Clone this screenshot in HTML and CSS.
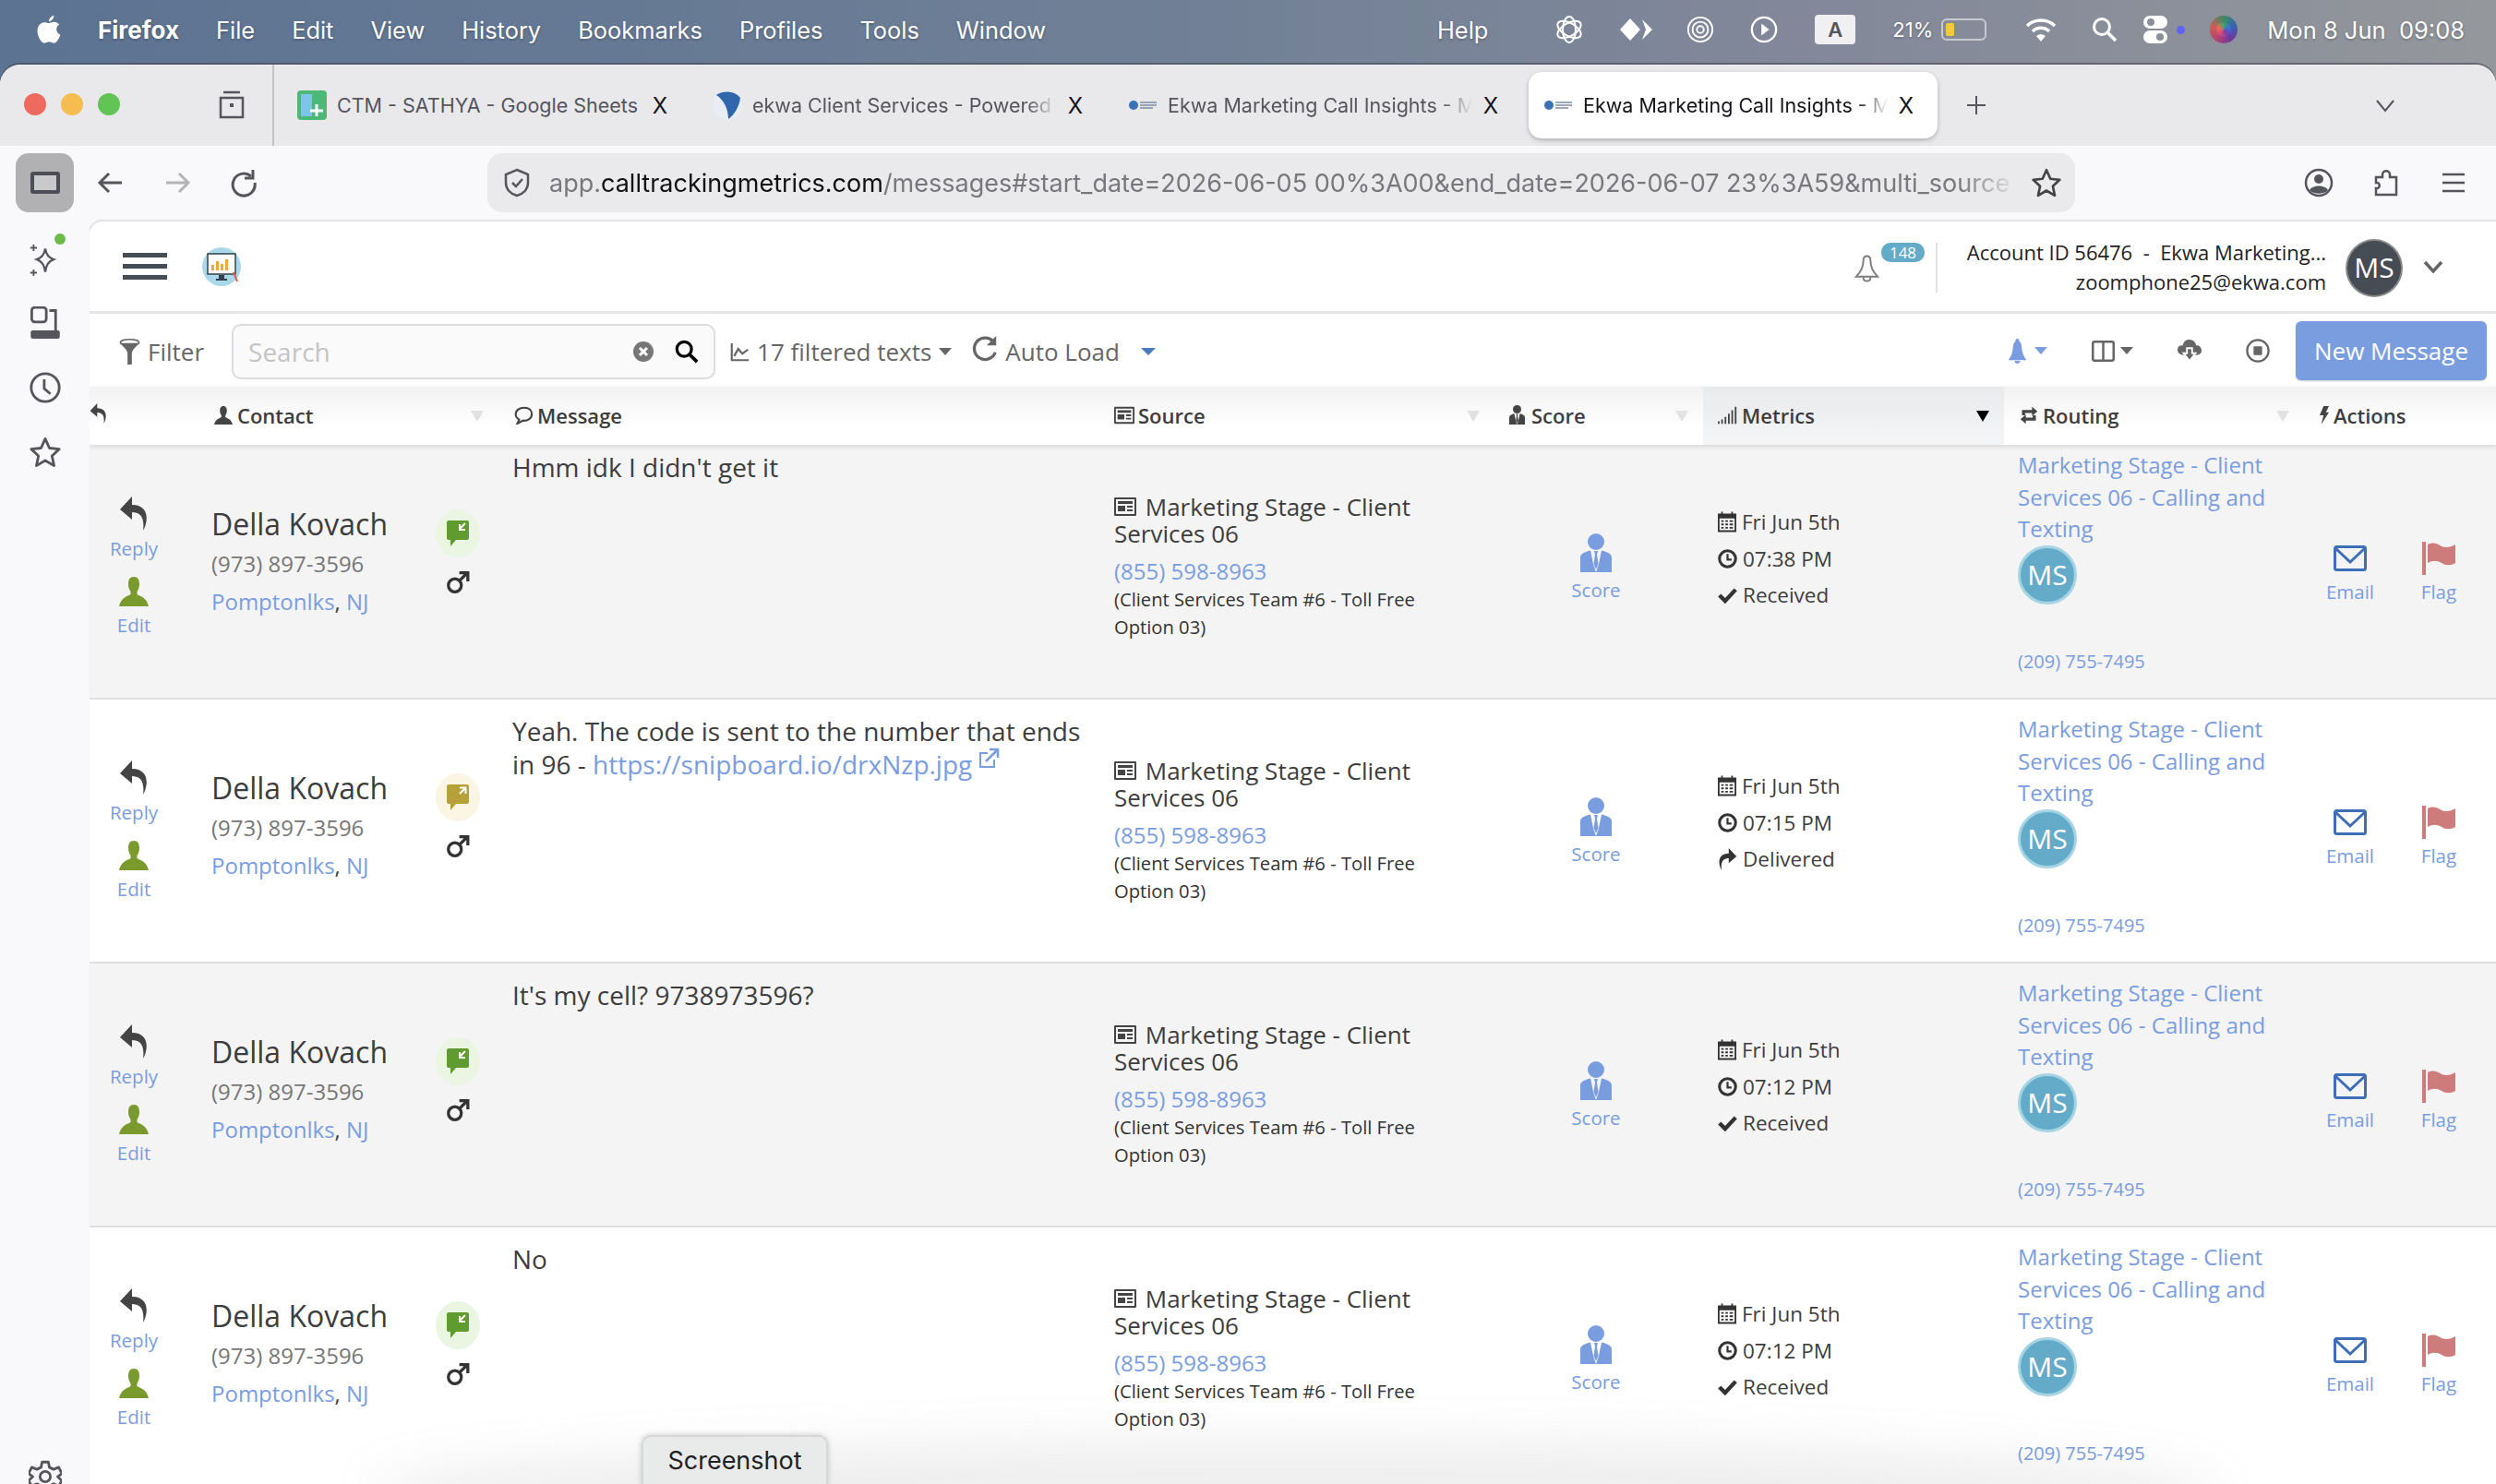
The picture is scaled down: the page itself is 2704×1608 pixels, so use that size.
FILE: index.html
```html
<!DOCTYPE html>
<html lang="en">
<head>
    <meta charset="UTF-8">
    <title>Ekwa Marketing Call Insights</title>
    <link rel="stylesheet" href="styles.css">
</head>
<body>
    <svg class="defs" width="0" height="0">
        <symbol id="i-reply" viewBox="0 0 30 37"><path d="M13 0 0 14 13 25V17C21 17 27 21 25 37 32 24 30 9 13 9Z"/></symbol>
        <symbol id="i-forward" viewBox="0 0 30 37"><path d="M17 0 30 14 17 25V17C9 17 3 21 5 37-2 24 0 9 17 9Z"/></symbol>
        <symbol id="i-user" viewBox="0 0 32 32"><path d="M16 0C11.500 0 10 3.500 10 8 10 11 11 14 12.500 16V19C8 21.500 2 23 0 32H32C30 23 24 21.500 19.500 19V16C21 14 22 11 22 8 22 3.500 20.500 0 16 0Z"/></symbol>
        <symbol id="i-male" viewBox="0 0 24 24"><circle cx="9" cy="15" r="6.500" fill="none" stroke="currentColor" stroke-width="3"/><path d="M13.500 10.500 21 3M13.500 2.500H22V11" fill="none" stroke="currentColor" stroke-width="3"/></symbol>
        <symbol id="i-in" viewBox="0 0 24 28"><path d="M2 0H22Q24 0 24 2V19Q24 21 22 21H10L4 28V21H2Q0 21 0 19V2Q0 0 2 0Z" fill="currentColor"/><path d="M20 3 14 9M14 4V10H20" fill="none" stroke="#fff" stroke-width="2"/></symbol>
        <symbol id="i-out" viewBox="0 0 24 28"><path d="M2 0H22Q24 0 24 2V19Q24 21 22 21H10L4 28V21H2Q0 21 0 19V2Q0 0 2 0Z" fill="currentColor"/><path d="M14 10 20 4M14 3.500H20.500V10" fill="none" stroke="#fff" stroke-width="2"/></symbol>
        <symbol id="i-news" viewBox="0 0 24 20"><path d="M1 0H23Q24 0 24 1V19Q24 20 23 20H1Q0 20 0 19V1Q0 0 1 0ZM2 2V18H22V2ZM4 4H20V7H4ZM4 9H12V15H4ZM14 9H20V11H14ZM14 13H20V15H14Z" fill-rule="evenodd"/></symbol>
        <symbol id="i-score" viewBox="0 0 34 42"><circle cx="17" cy="9" r="9"/><path d="M0 42V26C0 22 5 20 11 18.500L14 33 17 42ZM34 42V26C34 22 29 20 23 18.500L20 33 17 42ZM15 19H19L18 23 19.500 33 17 39 14.500 33 16 23Z"/></symbol>
        <symbol id="i-cal" viewBox="0 0 22 24"><path d="M0 2H4V0H6V2H16V0H18V2H22V24H0ZM2 8V22H20V8Z" fill-rule="evenodd"/><path d="M4 10H7V12H4ZM9 10H12V12H9ZM14 10H18V12H14ZM4 14H7V16H4ZM9 14H12V16H9ZM14 14H18V16H14ZM4 18H7V20H4ZM9 18H12V20H9ZM14 18H18V20H14Z"/></symbol>
        <symbol id="i-clock" viewBox="0 0 24 24"><circle cx="12" cy="12" r="10" fill="none" stroke="currentColor" stroke-width="3.500"/><path d="M12 6V13H17" fill="none" stroke="currentColor" stroke-width="2.500"/></symbol>
        <symbol id="i-check" viewBox="0 0 24 20"><path d="M2 10 9 17 22 3" fill="none" stroke="currentColor" stroke-width="5"/></symbol>
        <symbol id="i-mail" viewBox="0 0 36 28"><rect x="1.500" y="1.500" width="33" height="25" rx="2" fill="none" stroke="currentColor" stroke-width="3"/><path d="M2 3 18 18 34 3" fill="none" stroke="currentColor" stroke-width="3"/></symbol>
        <symbol id="i-flag" viewBox="0 0 36 36"><path d="M0 0H4V36H0ZM6 3C12 0 16 2 21 5 26 7 31 6 36 3V23C31 26 26 26 21 23 16 20 11 20 6 23Z"/></symbol>
        <symbol id="i-bubble" viewBox="0 0 24 24"><path d="M13 2C7 2 2 5.500 2 10.500 2 13.500 4 16 6.500 17.500L4 23 11 19C18 19.500 23 16 23 10.500 23 5.500 19 2 13 2Z" fill="none" stroke="currentColor" stroke-width="2.500"/></symbol>
        <symbol id="i-routing" viewBox="0 0 24 24"><path d="M3 12V5H16V1L23 7 16 13V9H7V12ZM21 12V19H8V23L1 17 8 11V15H17V12Z"/></symbol>
        <symbol id="i-bolt" viewBox="0 0 12 24"><path d="M5 0H12L8 8H12L2 24 5 12H0Z"/></symbol>
        <symbol id="i-bars" viewBox="0 0 24 20"><path d="M0 17H2V20H0ZM4 15H6V20H4ZM8 12H10V20H8ZM12 8H14V20H12ZM16 4H18V20H16ZM20 0H22V20H20Z"/></symbol>
        <symbol id="i-bell" viewBox="0 0 28 32"><path d="M14 2C11 2 10 4 10 7 10 14 7 20 2 25H26C21 20 18 14 18 7 18 4 17 2 14 2ZM10 26C10 29 12 30 14 30 16 30 18 29 18 26" fill="none" stroke="currentColor" stroke-width="2"/></symbol>
        <symbol id="i-bell-fill" viewBox="0 0 26 36"><path d="M13 0C11 0 10 2 10 4 7 6 7 10 6 18 5 23 3 26 0 31H26C23 26 21 23 20 18 19 10 19 6 16 4 16 2 15 0 13 0ZM9 32C9 35 11 36 13 36 15 36 17 35 17 32Z"/></symbol>
        <symbol id="i-star" viewBox="0 0 32 32"><path d="M16 3 20 12 29.500 13 22.500 19.500 24.500 29 16 24 7.500 29 9.500 19.500 2.500 13 12 12Z" fill="none" stroke="currentColor" stroke-width="2.500" stroke-linejoin="round"/></symbol>
    </svg>

    <header class="menubar">
        <svg class="apple" viewBox="0 0 24 28"><path d="M17 0C17 3 14.500 6 12 6 12 3 14.500 .5 17 0ZM12.300 7.500C14 7.500 15 6.400 17.300 6.400 19.300 6.400 21 7.400 22.300 9 18 11.500 19 17.500 23.500 19.200 22 23 19.500 27.500 17 27.500 15 27.500 14.500 26.300 12.300 26.300 10 26.300 9.300 27.500 7.500 27.500 4.500 27.500 .5 21 .5 15.500 .5 10 4 6.800 7.200 6.800 9.300 6.800 10.800 7.500 12.300 7.500Z"/></svg>
        <strong class="menu-app">Firefox</strong>
        <span>File</span>
        <span>Edit</span>
        <span>View</span>
        <span>History</span>
        <span>Bookmarks</span>
        <span>Profiles</span>
        <span>Tools</span>
        <span>Window</span>
        <div class="status">
            <span class="status-help">Help</span>
            <svg class="st st-a" viewBox="0 0 32 32"><g fill="none" stroke="#fff" stroke-width="2"><ellipse cx="16" cy="16" rx="14" ry="7" transform="rotate(30 16 16)"/><ellipse cx="16" cy="16" rx="14" ry="7" transform="rotate(90 16 16)"/><ellipse cx="16" cy="16" rx="14" ry="7" transform="rotate(150 16 16)"/></g></svg>
            <svg class="st st-b" viewBox="0 0 38 28"><path d="M12 2 23 14 12 26 1 14ZM25 3 36 14 25 25 29 14Z" fill="#fff"/></svg>
            <svg class="st st-c" viewBox="0 0 32 32"><g fill="none" stroke="#fff" stroke-width="2"><circle cx="16" cy="16" r="14"/><circle cx="16" cy="16" r="9"/><circle cx="16" cy="16" r="4"/></g></svg>
            <svg class="st st-d" viewBox="0 0 32 32"><circle cx="16" cy="16" r="14" fill="none" stroke="#fff" stroke-width="2.500"/><path d="M13 9 22 16 13 23Z" fill="#fff"/></svg>
            <span class="input-a">A</span>
            <span class="batt-text">21%</span>
            <span class="battery"><span class="battery-level"></span></span>
            <svg class="st st-e" viewBox="0 0 34 28"><g fill="none" stroke="#fff" stroke-width="3.500"><path d="M2 10C10 2 24 2 32 10"/><path d="M8 16C13 11 21 11 26 16"/></g><path d="M17 27 12 21C15 18.500 19 18.500 22 21Z" fill="#fff"/></svg>
            <svg class="st st-f" viewBox="0 0 28 28"><circle cx="11" cy="11" r="8.500" fill="none" stroke="#fff" stroke-width="3"/><path d="M17 17 26 26" stroke="#fff" stroke-width="3.500"/></svg>
            <svg class="st st-g" viewBox="0 0 28 32"><rect x="1" y="1" width="26" height="14" rx="7" fill="#fff"/><circle cx="9" cy="8" r="4" fill="#8a8f99"/><rect x="1" y="17" width="26" height="14" rx="7" fill="#fff"/><circle cx="19" cy="24" r="4" fill="#8a8f99"/></svg>
            <span class="status-dot"></span>
            <span class="siri"></span>
            <span class="clock">Mon 8 Jun&nbsp; 09:08</span>
        </div>
    </header>

    <div class="browser">
        <div class="tabstrip">
            <div class="lights"><i class="light red"></i><i class="light yellow"></i><i class="light green"></i></div>
            <div class="tabgroups">
                <svg viewBox="0 0 32 32"><path d="M7 2H25M4 8H28V29H4Z" fill="none" stroke="#55555c" stroke-width="2.500"/><rect x="14" y="14" width="4" height="4" fill="#55555c"/></svg>
            </div>
            <div class="tab tab-first">
                <svg class="favicon" viewBox="0 0 32 32"><rect width="32" height="32" rx="4" fill="#4cb877"/><rect x="4" y="4" width="12" height="24" fill="#7cc4e8"/><path d="M14 22H28M21 15V28" stroke="#fff" stroke-width="3"/></svg>
                <span class="tab-title tab-title-plain">CTM - SATHYA - Google Sheets</span>
                <span class="tab-x">X</span>
            </div>
            <div class="tab">
                <svg class="favicon" viewBox="0 0 32 32"><circle cx="16" cy="16" r="16" fill="#e9edf5"/><path d="M4 5C10 0 24 0 30 8 29 18 22 28 17 31 17 20 12 10 4 5Z" fill="#2f66ac"/></svg>
                <span class="tab-title">ekwa Client Services - Powered</span>
                <span class="tab-x">X</span>
            </div>
            <div class="tab">
                <svg class="favicon" viewBox="0 0 32 12"><circle cx="6" cy="6" r="5" fill="#3b71b5"/><path d="M13 3H31M13 6H31M13 9H27" stroke="#7d8ca3" stroke-width="1.500"/></svg>
                <span class="tab-title">Ekwa Marketing Call Insights - M</span>
                <span class="tab-x">X</span>
            </div>
            <div class="tab tab-active">
                <svg class="favicon" viewBox="0 0 32 12"><circle cx="6" cy="6" r="5" fill="#3b71b5"/><path d="M13 3H31M13 6H31M13 9H27" stroke="#7d8ca3" stroke-width="1.500"/></svg>
                <span class="tab-title">Ekwa Marketing Call Insights - M</span>
                <span class="tab-x">X</span>
            </div>
            <svg class="tab-plus" viewBox="0 0 24 24"><path d="M12 2V22M2 12H22" stroke="#55555c" stroke-width="2"/></svg>
            <svg class="tab-list" viewBox="0 0 24 24"><path d="M3 7 12 18 21 7" fill="none" stroke="#55555c" stroke-width="2"/></svg>
        </div>

        <div class="navbar">
            <div class="side-toggle"><span></span></div>
            <svg class="nav-icon" viewBox="0 0 32 32"><path d="M28 16H5M14 6 4 16 14 26" fill="none" stroke="#55555c" stroke-width="3"/></svg>
            <svg class="nav-icon nav-off" viewBox="0 0 32 32"><path d="M4 16H27M18 6 28 16 18 26" fill="none" stroke="#b4b4b8" stroke-width="3"/></svg>
            <svg class="nav-icon" viewBox="0 0 32 32"><path d="M24 9A12 12 0 1 0 28 16" fill="none" stroke="#55555c" stroke-width="3"/><path d="M26 2V11H17" fill="none" stroke="#55555c" stroke-width="3"/></svg>
            <div class="urlbar">
                <svg class="shield" viewBox="0 0 28 32"><path d="M14 2 26 7V16C26 23 21 28 14 30 7 28 2 23 2 16V7Z" fill="none" stroke="#55555c" stroke-width="2.500"/><path d="M9 16 13 20 20 12" fill="none" stroke="#55555c" stroke-width="2.500"/></svg>
                <div class="url">app.<b>calltrackingmetrics.com</b>/messages#start_date=2026-06-05 00%3A00&amp;end_date=2026-06-07 23%3A59&amp;multi_source</div>
                <svg class="url-star"><use href="#i-star"/></svg>
            </div>
            <svg class="nav-right" viewBox="0 0 32 32"><circle cx="16" cy="16" r="14" fill="none" stroke="#55555c" stroke-width="2.500"/><circle cx="16" cy="12" r="5" fill="#55555c"/><path d="M6 24C9 18 23 18 26 24 22 29 10 29 6 24Z" fill="#55555c"/></svg>
            <svg class="nav-right" viewBox="0 0 32 32"><path d="M5 10H12V7C12 2 20 2 20 7V10H27V29H5V22C10 23 10 15 5 16Z" fill="none" stroke="#55555c" stroke-width="2.500"/></svg>
            <svg class="nav-right" viewBox="0 0 32 32"><path d="M4 7H28M4 16H28M4 25H28" stroke="#55555c" stroke-width="2.500"/></svg>
        </div>

        <div class="workspace">
            <aside class="sidebar">
                <div class="side-item side-spark">
                    <svg viewBox="0 0 40 44"><path d="M20 8C21 15 24 19 30 21 24 23 21 28 20 36 19 28 16 23 10 21 16 19 19 15 20 8Z" fill="none" stroke="#55555c" stroke-width="2.500"/><path d="M6 3V11M2 7H10M6 33V41M2 37H10" stroke="#55555c" stroke-width="2"/></svg>
                    <i class="side-dot"></i>
                </div>
                <div class="side-item">
                    <svg viewBox="0 0 32 32"><rect x="3" y="1" width="14" height="14" rx="3" fill="none" stroke="#55555c" stroke-width="2.500"/><path d="M20 4H26V24" fill="none" stroke="#55555c" stroke-width="2.500"/><rect x="2" y="23" width="28" height="8" rx="2" fill="#55555c"/></svg>
                </div>
                <div class="side-item">
                    <svg viewBox="0 0 32 32"><circle cx="16" cy="16" r="13.500" fill="none" stroke="#55555c" stroke-width="2.500"/><path d="M15 8V17L21 22" fill="none" stroke="#55555c" stroke-width="2.500"/></svg>
                </div>
                <div class="side-item">
                    <svg><use href="#i-star"/></svg>
                </div>
                <div class="side-item side-gear">
                    <svg viewBox="0 0 32 32"><path d="M13 2H19L20 7 24 9 29 7 32 13 28 16 32 20 29 25 24 23 20 25 19 30H13L12 25 8 23 3 25 0 20 4 16 0 13 3 7 8 9 12 7Z" fill="none" stroke="#55555c" stroke-width="2.500" stroke-linejoin="round"/><circle cx="16" cy="16" r="5" fill="none" stroke="#55555c" stroke-width="2.500"/></svg>
                </div>
            </aside>

            <main class="app">
                <div class="app-header">
                    <div class="hamburger"><span></span><span></span><span></span></div>
                    <svg class="logo" viewBox="0 0 42 44"><circle cx="21" cy="22" r="21" fill="#a9d8ea"/><rect x="6" y="8" width="30" height="22" fill="#fff" stroke="#33404e" stroke-width="1.500"/><path d="M10 26V20H13V26ZM15 26V16H18V26ZM20 26V19H23V26ZM25 26V14H28V26Z" fill="#eda93a"/><path d="M18 31H24V35H27V37H15V35H18Z" fill="#33404e"/><path d="M34 28 38 38" stroke="#e1553f" stroke-width="2"/></svg>
                    <div class="notify">
                        <svg class="notify-bell"><use href="#i-bell"/></svg>
                        <span class="badge">148</span>
                    </div>
                    <div class="account">
                        <div>Account ID 56476 &nbsp;-&nbsp; Ekwa Marketing...</div>
                        <div>zoomphone25@ekwa.com</div>
                    </div>
                    <div class="user-avatar">MS</div>
                    <svg class="user-chevron" viewBox="0 0 24 24"><path d="M3 7 12 17 21 7" fill="none" stroke="#666" stroke-width="3.500"/></svg>
                </div>

                <div class="toolbar">
                    <svg class="funnel" viewBox="0 0 28 36"><ellipse cx="14" cy="5" rx="13" ry="4" fill="none" stroke="#666" stroke-width="2"/><path d="M1 6C5 12 10 14 11 20V36H17V20C18 14 23 12 27 6Z" fill="#666"/></svg>
                    <span class="filter-label">Filter</span>
                    <div class="search">
                        <span class="search-text">Search</span>
                        <svg class="search-clear" viewBox="0 0 24 24"><circle cx="12" cy="12" r="11" fill="#777"/><path d="M8 8 16 16M16 8 8 16" stroke="#fff" stroke-width="3"/></svg>
                        <svg class="search-go" viewBox="0 0 28 28"><circle cx="11" cy="11" r="8.500" fill="none" stroke="#000" stroke-width="3.500"/><path d="M17 17 26 26" stroke="#000" stroke-width="4"/></svg>
                    </div>
                    <svg class="chart" viewBox="0 0 24 24"><path d="M2 1V22H23" fill="none" stroke="#666" stroke-width="2.500"/><path d="M5 17 10 8 15 14 22 9" fill="none" stroke="#666" stroke-width="2.500"/></svg>
                    <span class="tool-text">17 filtered texts</span>
                    <i class="caret caret-gray"></i>
                    <svg class="auto-icon" viewBox="0 0 32 32"><path d="M26 8A12.500 12.500 0 1 0 28 20" fill="none" stroke="#666" stroke-width="3.500"/><path d="M29 1V12H18Z" fill="#666"/></svg>
                    <span class="tool-text">Auto Load</span>
                    <i class="caret caret-blue"></i>
                    <div class="tool-right">
                        <svg class="tool-bell"><use href="#i-bell-fill"/></svg>
                        <i class="caret caret-light"></i>
                        <svg class="tool-cols" viewBox="0 0 25 23"><rect x="1.250" y="1.250" width="22.500" height="20.500" rx="2" fill="none" stroke="#666" stroke-width="2.500"/><path d="M12.500 2V21" stroke="#666" stroke-width="2.500"/></svg>
                        <i class="caret caret-dark"></i>
                        <svg class="tool-cloud" viewBox="0 0 28 28"><path d="M7 19C2 19 0 16 0 13 0 9 3 7 6 8 7 3 10 1 14 1 18 1 21 4 22 8 25 7 28 10 28 14 28 17 26 19 22 19Z" fill="#666"/><path d="M11 11H17V17H21L14 26 7 17H11Z" fill="#666" stroke="#fff" stroke-width="2"/></svg>
                        <svg class="tool-stop" viewBox="0 0 28 28"><circle cx="14" cy="14" r="12.500" fill="none" stroke="#666" stroke-width="2.500"/><rect x="9" y="9" width="10" height="10" rx="1" fill="#666"/></svg>
                        <button class="new-message" type="button">New Message</button>
                    </div>
                </div>

                <div class="grid-row table-head">
                    <div class="th th-reply"><svg class="th-icon th-back"><use href="#i-reply"/></svg></div>
                    <div class="th"><svg class="th-icon"><use href="#i-user"/></svg>Contact<i class="sort"></i></div>
                    <div class="th"><svg class="th-icon th-line"><use href="#i-bubble"/></svg>Message</div>
                    <div class="th"><svg class="th-icon"><use href="#i-news"/></svg>Source<i class="sort"></i></div>
                    <div class="th"><svg class="th-icon th-score"><use href="#i-score"/></svg>Score<i class="sort"></i></div>
                    <div class="th th-active"><svg class="th-icon"><use href="#i-bars"/></svg>Metrics<i class="sort sort-on"></i></div>
                    <div class="th"><svg class="th-icon"><use href="#i-routing"/></svg>Routing<i class="sort"></i></div>
                    <div class="th"><svg class="th-icon th-bolt"><use href="#i-bolt"/></svg>Actions</div>
                </div>

                <div class="rows">
                    <div class="grid-row msg-row msg-row-odd">
                        <div class="cell-act">
                            <svg class="act-reply"><use href="#i-reply"/></svg>
                            <a class="act-link">Reply</a>
                            <svg class="act-edit"><use href="#i-user"/></svg>
                            <a class="act-link">Edit</a>
                        </div>
                        <div class="cell-contact">
                            <div class="contact-info">
                                <div class="contact-name">Della Kovach</div>
                                <div class="contact-phone">(973) 897-3596</div>
                                <div class="contact-loc"><a>Pomptonlks</a>, <a>NJ</a></div>
                            </div>
                            <div class="contact-marks">
                                <div class="dir dir-in"><svg><use href="#i-in"/></svg></div>
                                <svg class="gender"><use href="#i-male"/></svg>
                            </div>
                        </div>
                        <div class="cell-message">Hmm idk I didn't get it</div>
                        <div class="cell-source">
                            <div class="source-name"><svg class="source-icon"><use href="#i-news"/></svg> Marketing Stage - Client Services 06</div>
                            <a class="source-phone">(855) 598-8963</a>
                            <div class="source-note">(Client Services Team #6 - Toll Free Option 03)</div>
                        </div>
                        <div class="cell-score">
                            <svg class="score-icon"><use href="#i-score"/></svg>
                            <a class="act-link">Score</a>
                        </div>
                        <div class="cell-metrics">
                            <div class="metric"><svg class="m-cal"><use href="#i-cal"/></svg>Fri Jun 5th</div>
                            <div class="metric"><svg class="m-clock"><use href="#i-clock"/></svg>07:38 PM</div>
                            <div class="metric"><svg class="m-check"><use href="#i-check"/></svg>Received</div>
                        </div>
                        <div class="cell-routing">
                            <a class="route-name">Marketing Stage - Client Services 06 - Calling and Texting</a>
                            <div class="route-avatar">MS</div>
                            <a class="route-phone">(209) 755-7495</a>
                        </div>
                        <div class="cell-actions">
                            <div class="action"><svg class="a-mail"><use href="#i-mail"/></svg><a class="act-link">Email</a></div>
                            <div class="action"><svg class="a-flag"><use href="#i-flag"/></svg><a class="act-link">Flag</a></div>
                        </div>
                    </div>

                    <div class="grid-row msg-row">
                        <div class="cell-act">
                            <svg class="act-reply"><use href="#i-reply"/></svg>
                            <a class="act-link">Reply</a>
                            <svg class="act-edit"><use href="#i-user"/></svg>
                            <a class="act-link">Edit</a>
                        </div>
                        <div class="cell-contact">
                            <div class="contact-info">
                                <div class="contact-name">Della Kovach</div>
                                <div class="contact-phone">(973) 897-3596</div>
                                <div class="contact-loc"><a>Pomptonlks</a>, <a>NJ</a></div>
                            </div>
                            <div class="contact-marks">
                                <div class="dir dir-out"><svg><use href="#i-out"/></svg></div>
                                <svg class="gender"><use href="#i-male"/></svg>
                            </div>
                        </div>
                        <div class="cell-message">Yeah. The code is sent to the number that ends in 96 - <a>https://snipboard.io/drxNzp.jpg</a><svg class="ext-link" viewBox="0 0 24 24"><path d="M18 13V21H3V6H11" fill="none" stroke="currentColor" stroke-width="2"/><path d="M9 15 21 3M13 2H22V11" fill="none" stroke="currentColor" stroke-width="2.500"/></svg></div>
                        <div class="cell-source">
                            <div class="source-name"><svg class="source-icon"><use href="#i-news"/></svg> Marketing Stage - Client Services 06</div>
                            <a class="source-phone">(855) 598-8963</a>
                            <div class="source-note">(Client Services Team #6 - Toll Free Option 03)</div>
                        </div>
                        <div class="cell-score">
                            <svg class="score-icon"><use href="#i-score"/></svg>
                            <a class="act-link">Score</a>
                        </div>
                        <div class="cell-metrics">
                            <div class="metric"><svg class="m-cal"><use href="#i-cal"/></svg>Fri Jun 5th</div>
                            <div class="metric"><svg class="m-clock"><use href="#i-clock"/></svg>07:15 PM</div>
                            <div class="metric"><svg class="m-fwd"><use href="#i-forward"/></svg>Delivered</div>
                        </div>
                        <div class="cell-routing">
                            <a class="route-name">Marketing Stage - Client Services 06 - Calling and Texting</a>
                            <div class="route-avatar">MS</div>
                            <a class="route-phone">(209) 755-7495</a>
                        </div>
                        <div class="cell-actions">
                            <div class="action"><svg class="a-mail"><use href="#i-mail"/></svg><a class="act-link">Email</a></div>
                            <div class="action"><svg class="a-flag"><use href="#i-flag"/></svg><a class="act-link">Flag</a></div>
                        </div>
                    </div>

                    <div class="grid-row msg-row msg-row-odd">
                        <div class="cell-act">
                            <svg class="act-reply"><use href="#i-reply"/></svg>
                            <a class="act-link">Reply</a>
                            <svg class="act-edit"><use href="#i-user"/></svg>
                            <a class="act-link">Edit</a>
                        </div>
                        <div class="cell-contact">
                            <div class="contact-info">
                                <div class="contact-name">Della Kovach</div>
                                <div class="contact-phone">(973) 897-3596</div>
                                <div class="contact-loc"><a>Pomptonlks</a>, <a>NJ</a></div>
                            </div>
                            <div class="contact-marks">
                                <div class="dir dir-in"><svg><use href="#i-in"/></svg></div>
                                <svg class="gender"><use href="#i-male"/></svg>
                            </div>
                        </div>
                        <div class="cell-message">It's my cell? 9738973596?</div>
                        <div class="cell-source">
                            <div class="source-name"><svg class="source-icon"><use href="#i-news"/></svg> Marketing Stage - Client Services 06</div>
                            <a class="source-phone">(855) 598-8963</a>
                            <div class="source-note">(Client Services Team #6 - Toll Free Option 03)</div>
                        </div>
                        <div class="cell-score">
                            <svg class="score-icon"><use href="#i-score"/></svg>
                            <a class="act-link">Score</a>
                        </div>
                        <div class="cell-metrics">
                            <div class="metric"><svg class="m-cal"><use href="#i-cal"/></svg>Fri Jun 5th</div>
                            <div class="metric"><svg class="m-clock"><use href="#i-clock"/></svg>07:12 PM</div>
                            <div class="metric"><svg class="m-check"><use href="#i-check"/></svg>Received</div>
                        </div>
                        <div class="cell-routing">
                            <a class="route-name">Marketing Stage - Client Services 06 - Calling and Texting</a>
                            <div class="route-avatar">MS</div>
                            <a class="route-phone">(209) 755-7495</a>
                        </div>
                        <div class="cell-actions">
                            <div class="action"><svg class="a-mail"><use href="#i-mail"/></svg><a class="act-link">Email</a></div>
                            <div class="action"><svg class="a-flag"><use href="#i-flag"/></svg><a class="act-link">Flag</a></div>
                        </div>
                    </div>

                    <div class="grid-row msg-row">
                        <div class="cell-act">
                            <svg class="act-reply"><use href="#i-reply"/></svg>
                            <a class="act-link">Reply</a>
                            <svg class="act-edit"><use href="#i-user"/></svg>
                            <a class="act-link">Edit</a>
                        </div>
                        <div class="cell-contact">
                            <div class="contact-info">
                                <div class="contact-name">Della Kovach</div>
                                <div class="contact-phone">(973) 897-3596</div>
                                <div class="contact-loc"><a>Pomptonlks</a>, <a>NJ</a></div>
                            </div>
                            <div class="contact-marks">
                                <div class="dir dir-in"><svg><use href="#i-in"/></svg></div>
                                <svg class="gender"><use href="#i-male"/></svg>
                            </div>
                        </div>
                        <div class="cell-message">No</div>
                        <div class="cell-source">
                            <div class="source-name"><svg class="source-icon"><use href="#i-news"/></svg> Marketing Stage - Client Services 06</div>
                            <a class="source-phone">(855) 598-8963</a>
                            <div class="source-note">(Client Services Team #6 - Toll Free Option 03)</div>
                        </div>
                        <div class="cell-score">
                            <svg class="score-icon"><use href="#i-score"/></svg>
                            <a class="act-link">Score</a>
                        </div>
                        <div class="cell-metrics">
                            <div class="metric"><svg class="m-cal"><use href="#i-cal"/></svg>Fri Jun 5th</div>
                            <div class="metric"><svg class="m-clock"><use href="#i-clock"/></svg>07:12 PM</div>
                            <div class="metric"><svg class="m-check"><use href="#i-check"/></svg>Received</div>
                        </div>
                        <div class="cell-routing">
                            <a class="route-name">Marketing Stage - Client Services 06 - Calling and Texting</a>
                            <div class="route-avatar">MS</div>
                            <a class="route-phone">(209) 755-7495</a>
                        </div>
                        <div class="cell-actions">
                            <div class="action"><svg class="a-mail"><use href="#i-mail"/></svg><a class="act-link">Email</a></div>
                            <div class="action"><svg class="a-flag"><use href="#i-flag"/></svg><a class="act-link">Flag</a></div>
                        </div>
                    </div>
                </div>
            </main>
        </div>
    </div>

    <div class="shot-shade"></div>
    <div class="shot-tip">Screenshot</div>
</body>
</html>
```

FILE: styles.css
```css
* {
    box-sizing: border-box;
}

html, body {
    margin: 0;
    height: 1608px;
    overflow: hidden;
}

body {
    position: relative;
    display: flex;
    flex-direction: column;
    font-family: "Open Sans", Arial, sans-serif;
    color: #3d3d3d;
    background: linear-gradient(90deg, #5c7392 0%, #6f7f96 45%, #84899a 75%, #94979b 100%);
}

a {
    color: #7a9de0;
}

.defs {
    position: absolute;
}

/* mac menu bar */
.menubar {
    flex: 0 0 70px;
    display: flex;
    align-items: center;
    gap: 40px;
    padding: 0 34px 6px 40px;
    font-family: Inter, "Liberation Sans", sans-serif;
    font-size: 25.400px;
    color: #fff;
    text-shadow: 0 1px 3px rgba(0, 0, 0, .3);
}

.apple {
    width: 26px;
    height: 32px;
    fill: #fff;
}

.menu-app {
    font-weight: 700;
    font-size: 26px;
}

.status {
    margin-left: auto;
    display: flex;
    align-items: center;
}

.status-help {
    margin-right: 72px;
}

.st {
    display: block;
    flex: none;
}

.st-a { width: 32px; height: 32px; margin-right: 38px; }
.st-b { width: 38px; height: 28px; margin-right: 35px; }
.st-c { width: 30px; height: 32px; margin-right: 39px; }
.st-d { width: 30px; height: 32px; margin-right: 40px; }
.st-e { width: 34px; height: 28px; margin-right: 38px; }
.st-f { width: 28px; height: 28px; margin-right: 27px; }
.st-g { width: 28px; height: 32px; margin-right: 9px; }

.input-a {
    width: 44px;
    height: 32px;
    margin-right: 40px;
    border-radius: 4px;
    background: #f0f0f2;
    color: #555;
    font-size: 22px;
    font-weight: 600;
    text-align: center;
    line-height: 32px;
    text-shadow: none;
}

.batt-text {
    font-size: 22px;
    margin-right: 9px;
}

.battery {
    width: 49px;
    height: 24px;
    margin-right: 42px;
    padding: 3px;
    border: 2px solid rgba(255, 255, 255, .55);
    border-radius: 6px;
}

.battery-level {
    display: block;
    width: 9px;
    height: 100%;
    border-radius: 2px;
    background: #f5c93c;
}

.status-dot {
    width: 9px;
    height: 9px;
    margin-right: 27px;
    border-radius: 50%;
    background: #5f63f0;
}

.siri {
    width: 30px;
    height: 30px;
    margin-right: 32px;
    border-radius: 50%;
    background: conic-gradient(#3fa06a, #3b6fd0, #7b3fb0, #d04a7a, #e86a5a, #3fa06a);
    box-shadow: inset 0 0 0 7px rgba(40, 30, 50, .15);
}

.clock {
    font-size: 25.500px;
}

/* firefox window */
.browser {
    flex: 1;
    min-height: 0;
    display: flex;
    flex-direction: column;
    border-radius: 22px 22px 0 0;
    overflow: hidden;
    background: #f9f9fb;
    box-shadow: 0 -2px 0 rgba(60, 60, 70, .5);
}

.tabstrip {
    flex: 0 0 88px;
    display: flex;
    align-items: center;
    background: #e9e9ec;
    font-family: Inter, "Liberation Sans", sans-serif;
    font-size: 21.500px;
}

.lights {
    display: flex;
    gap: 16px;
    padding-left: 26px;
    padding-bottom: 2px;
}

.light {
    width: 24px;
    height: 24px;
    border-radius: 50%;
}

.red { background: #ee6a5f; }
.yellow { background: #f5bd4f; }
.green { background: #61c454; }

.tabgroups {
    flex: 0 0 167px;
    align-self: stretch;
    display: flex;
    align-items: center;
    justify-content: flex-end;
    padding-right: 28px;
    border-right: 2px solid #c4c4c6;
}

.tabgroups svg {
    width: 32px;
    height: 32px;
}

.tab {
    flex: 0 0 443px;
    min-width: 0;
    height: 72px;
    margin-right: 7px;
    display: flex;
    align-items: center;
    padding: 0 22px 0 16px;
    color: #55555c;
}

.tab-first {
    margin-left: 9px;
}

.tab-active {
    background: #fff;
    color: #15141a;
    border-radius: 14px;
    box-shadow: 0 2px 5px rgba(0, 0, 0, .25);
}

.favicon {
    flex: 0 0 32px;
    width: 32px;
    height: 32px;
    margin-right: 11px;
}

.tab-title {
    flex: 1;
    min-width: 0;
    white-space: nowrap;
    overflow: hidden;
    -webkit-mask-image: linear-gradient(90deg, #000 90%, transparent);
    mask-image: linear-gradient(90deg, #000 90%, transparent);
}

.tab-title-plain {
    -webkit-mask-image: none;
    mask-image: none;
}

.tab-x {
    flex: none;
    width: 24px;
    margin-left: 8px;
    color: #15141a;
    font-size: 24px;
    text-align: center;
}

.tab-plus {
    flex: none;
    width: 24px;
    height: 24px;
    margin-left: 23px;
}

.tab-list {
    flex: none;
    width: 24px;
    height: 24px;
    margin-left: auto;
    margin-right: 108px;
}

.navbar {
    flex: 0 0 80px;
    display: flex;
    align-items: center;
    padding-left: 17px;
    font-family: Inter, "Liberation Sans", sans-serif;
}

.side-toggle {
    flex: none;
    width: 63px;
    height: 64px;
    margin-right: 24px;
    display: flex;
    align-items: center;
    justify-content: center;
    border-radius: 14px;
    background: #b1b1b3;
}

.side-toggle span {
    width: 32px;
    height: 24px;
    border: 4px solid #4d4d55;
    border-radius: 3px;
    background: #c9c9cb;
}

.nav-icon {
    flex: none;
    width: 32px;
    height: 32px;
    margin-right: 40px;
}

.urlbar {
    flex: 0 0 1720px;
    height: 64px;
    margin-left: 208px;
    margin-right: 248px;
    display: flex;
    align-items: center;
    padding: 0 14px 0 18px;
    border-radius: 16px;
    background: #eaeaed;
}

.shield {
    flex: none;
    width: 28px;
    height: 32px;
    margin-right: 21px;
}

.url {
    flex: 1;
    min-width: 0;
    white-space: nowrap;
    overflow: hidden;
    font-size: 27px;
    color: #77777c;
    -webkit-mask-image: linear-gradient(90deg, #000 96%, transparent);
    mask-image: linear-gradient(90deg, #000 96%, transparent);
}

.url b {
    font-weight: 400;
    color: #111;
}

.url-star {
    flex: none;
    width: 34px;
    height: 34px;
    margin-left: 14px;
    color: #444;
}

.nav-right {
    flex: none;
    width: 32px;
    height: 32px;
    margin-right: 41px;
}

.nav-right:last-child {
    margin-right: 0;
}

.workspace {
    flex: 1;
    min-height: 0;
    display: flex;
}

.sidebar {
    flex: 0 0 97px;
    position: relative;
    display: flex;
    flex-direction: column;
    align-items: center;
    padding-top: 24px;
    gap: 38px;
    background: #f9f9fb;
}

.side-item {
    position: relative;
    width: 36px;
    height: 32px;
}

.side-item svg {
    display: block;
    width: 36px;
    height: 36px;
    color: #55555c;
}

.side-spark svg {
    height: 40px;
}

.side-dot {
    position: absolute;
    top: -9px;
    right: -4px;
    width: 12px;
    height: 12px;
    border-radius: 50%;
    background: #6cba48;
}

.side-gear {
    position: absolute;
    bottom: -6px;
}

.app {
    flex: 1;
    min-width: 0;
    margin-left: -2px;
    display: flex;
    flex-direction: column;
    background: #fff;
    border-top: 2px solid #e2e2e6;
    border-left: 2px solid #e2e2e6;
    border-top-left-radius: 16px;
    overflow: hidden;
}

.app-header {
    flex: 0 0 100px;
    display: flex;
    align-items: center;
    padding-left: 36px;
    border-bottom: 3px solid #e6e6e6;
}

.hamburger {
    width: 48px;
    margin-right: 38px;
    display: flex;
    flex-direction: column;
    gap: 7px;
}

.hamburger span {
    height: 5px;
    background: #454c53;
}

.logo {
    width: 42px;
    height: 44px;
}

.notify {
    margin-left: auto;
    position: relative;
    width: 90px;
    height: 54px;
    margin-top: 3px;
    border-right: 2px solid #e3e3e3;
}

.notify-bell {
    position: absolute;
    left: 0;
    top: 12px;
    width: 27px;
    height: 32px;
    color: #7d7d7d;
}

.badge {
    position: absolute;
    left: 29px;
    top: 0;
    width: 47px;
    height: 21px;
    border-radius: 10px;
    background: #63abc9;
    color: #fff;
    font-size: 17px;
    line-height: 21px;
    text-align: center;
}

.account {
    flex: none;
    width: 421px;
    white-space: nowrap;
    text-align: right;
    font-size: 22px;
    line-height: 32px;
    color: #222;
    margin-top: 1px;
}

.user-avatar {
    flex: none;
    width: 62px;
    height: 63px;
    margin-left: 21px;
    margin-top: 3px;
    border-radius: 50%;
    background: #454c53;
    border: 2px solid #888;
    color: #fff;
    font-size: 30px;
    line-height: 58px;
    text-align: center;
}

.user-chevron {
    flex: none;
    width: 24px;
    height: 24px;
    margin-left: 21px;
    margin-right: 56px;
}

.toolbar {
    flex: 0 0 79px;
    display: flex;
    align-items: center;
    padding: 3px 10px 0 30px;
    color: #666;
    font-size: 26px;
}

.funnel {
    width: 27px;
    height: 28px;
    margin-right: 6px;
}

.filter-label {
    color: #666;
}

.search {
    width: 524px;
    height: 60px;
    margin-left: 30px;
    margin-right: 16px;
    display: flex;
    align-items: center;
    padding: 0 16px;
    border: 2px solid #dcdcdc;
    border-radius: 10px;
    background: #fafafa;
}

.search-text {
    flex: 1;
    color: #c4c4c4;
    font-size: 28px;
}

.search-clear {
    width: 24px;
    height: 24px;
    margin-right: 22px;
}

.search-go {
    width: 26px;
    height: 26px;
}

.chart {
    width: 21px;
    height: 21px;
    margin-right: 8px;
}

.tool-text {
    color: #666;
}

.caret {
    display: block;
    flex: none;
    width: 0;
    height: 0;
    border-left: 7px solid transparent;
    border-right: 7px solid transparent;
    border-top: 8px solid #666;
}

.caret-gray { margin: 0 21px 0 8px; }

.auto-icon {
    width: 30px;
    height: 30px;
    margin-right: 7px;
    margin-top: -6px;
}

.caret-blue {
    margin-left: 23px;
    border-left-width: 8px;
    border-right-width: 8px;
    border-top-color: #4a7ab8;
}

.tool-right {
    margin-left: auto;
    display: flex;
    align-items: center;
    margin-top: -2px;
}

.tool-bell {
    width: 23px;
    height: 27px;
    margin-right: 7px;
    fill: #7a9de0;
}

.caret-light {
    margin-right: 48px;
    border-top-color: #7a9de0;
}

.tool-cols {
    width: 25px;
    height: 23px;
    margin-right: 6px;
}

.caret-dark {
    margin-right: 48px;
}

.tool-cloud {
    width: 26px;
    height: 26px;
    margin-right: 48px;
}

.tool-stop {
    width: 26px;
    height: 26px;
    margin-right: 28px;
}

.new-message {
    width: 207px;
    height: 64px;
    border: none;
    border-radius: 6px;
    background: #7a9de0;
    color: #fff;
    font-family: "Open Sans", Arial, sans-serif;
    font-size: 26px;
    box-shadow: 0 1px 2px rgba(0, 0, 0, .2);
}

/* table */
.grid-row {
    display: grid;
    grid-template-columns: 118px 325px 651px 428px 226px 326px 325px 1fr;
}

.table-head {
    flex: 0 0 63px;
    position: relative;
    z-index: 2;
    background: linear-gradient(#f2f2f3, #fff 70%);
    box-shadow: 0 2px 5px rgba(0, 0, 0, .12);
}

.th {
    position: relative;
    display: flex;
    align-items: center;
    padding: 0 0 2px 16px;
    font-size: 22px;
    font-weight: 600;
    color: #3d3d3d;
}

.th-reply {
    padding-left: 0;
    padding-bottom: 6px;
}

.th-active {
    background: linear-gradient(#e9eaec, #f4f5f6);
}

.th-icon {
    flex: none;
    width: 22px;
    height: 20px;
    margin-right: 4px;
    fill: #444;
    color: #444;
}

.th-back {
    width: 19px;
    height: 22px;
}

.th-line {
    fill: none;
}

.th-score {
    width: 17px;
    height: 21px;
    margin-right: 7px;
}

.th-bolt {
    width: 12px;
}

.sort {
    position: absolute;
    right: 16px;
    top: 26px;
    width: 0;
    height: 0;
    border-left: 7px solid transparent;
    border-right: 7px solid transparent;
    border-top: 12px solid #e2e2e2;
}

.sort-on {
    border-top-color: #000;
}

.rows {
    flex: 1;
    min-height: 0;
    margin-top: -10px;
    overflow: hidden;
}

.msg-row {
    height: 286px;
    background: #fff;
    border-bottom: 2px solid #dedede;
}

.msg-row-odd {
    background: #f4f4f4;
}

.cell-act {
    display: flex;
    flex-direction: column;
    align-items: center;
    padding-top: 66px;
    padding-right: 22px;
}

.act-link {
    font-size: 20.500px;
    line-height: 28px;
    color: #7a9de0;
}

.act-reply {
    width: 30px;
    height: 37px;
    fill: #444;
    margin-bottom: 5px;
}

.act-edit {
    width: 32px;
    height: 32px;
    margin-top: 17px;
    margin-bottom: 6px;
    fill: #7a9a2e;
}

.cell-contact {
    display: flex;
    padding: 74px 20px 0 14px;
}

.contact-info {
    flex: 1;
}

.contact-name {
    font-size: 32px;
    line-height: 44px;
    color: #3d3d3d;
}

.contact-phone {
    font-size: 24px;
    line-height: 42px;
    color: #777;
}

.contact-loc {
    font-size: 24px;
    line-height: 40px;
    color: #3d3d3d;
}

.contact-marks {
    flex: 0 0 48px;
    display: flex;
    flex-direction: column;
    align-items: center;
    padding-top: 6px;
}

.dir {
    width: 48px;
    height: 52px;
    display: flex;
    align-items: center;
    justify-content: center;
    border-radius: 50%;
}

.dir svg {
    width: 24px;
    height: 28px;
}

.dir-in {
    background: #eaf5e2;
    color: #5f9b2f;
}

.dir-out {
    background: #fbf5e3;
    color: #b6a03a;
}

.gender {
    width: 26px;
    height: 26px;
    margin-top: 14px;
    color: #333;
}

.cell-message {
    padding: 16px 20px 0 15px;
    font-size: 28px;
    line-height: 36px;
    color: #3d3d3d;
}

.ext-link {
    width: 24px;
    height: 24px;
    margin-left: 6px;
    vertical-align: top;
    color: #7a9de0;
}

.cell-source {
    padding: 63px 55px 0 16px;
}

.source-name {
    font-size: 26px;
    line-height: 29px;
    color: #3d3d3d;
}

.source-icon {
    width: 24px;
    height: 20px;
    margin-right: 3px;
    fill: #444;
}

.source-phone {
    display: block;
    margin-top: 11px;
    font-size: 24px;
    line-height: 30px;
}

.source-note {
    margin-top: 1px;
    font-size: 20.200px;
    line-height: 29.500px;
    color: #333;
}

.cell-score {
    display: flex;
    flex-direction: column;
    align-items: center;
    padding-top: 106px;
    padding-right: 6px;
}

.score-icon {
    width: 34px;
    height: 42px;
    fill: #7a9de0;
    margin-bottom: 5px;
}

.cell-metrics {
    padding: 74px 0 0 16px;
}

.metric {
    display: flex;
    align-items: center;
    height: 39.500px;
    font-size: 22.500px;
    color: #3d3d3d;
}

.metric svg {
    flex: none;
    margin-right: 6px;
    fill: #333;
    color: #333;
}

.m-cal { width: 20px; height: 23px; }
.m-clock { width: 21px; height: 21px; }
.m-check { width: 21px; height: 18px; }
.m-fwd { width: 21px; height: 24px; }

.cell-routing {
    padding: 15px 30px 0 15px;
}

.route-name {
    display: block;
    font-size: 24px;
    line-height: 34.500px;
}

.route-avatar {
    width: 64px;
    height: 64px;
    border-radius: 50%;
    border: 3px solid #a5d4e4;
    background: #63abc9;
    color: #fff;
    font-size: 30px;
    line-height: 58px;
    text-align: center;
}

.route-phone {
    display: block;
    margin-top: 48px;
    font-size: 20px;
    line-height: 28px;
}

.cell-actions {
    display: flex;
    padding-top: 119px;
    padding-left: 2px;
}

.action {
    flex: 0 0 96px;
    display: flex;
    flex-direction: column;
    align-items: center;
}

.a-mail {
    width: 36px;
    height: 28px;
    margin-bottom: 8px;
    color: #3e6eb8;
}

.a-flag {
    width: 36px;
    height: 36px;
    margin-top: -4px;
    margin-bottom: 4px;
    fill: #cd7b7b;
}

/* screenshot tooltip from the mac toolbar */
.shot-shade {
    position: absolute;
    left: 400px;
    right: 300px;
    bottom: -60px;
    height: 110px;
    border-radius: 50%;
    background: rgba(120, 120, 120, .12);
    filter: blur(24px);
}

.shot-tip {
    position: absolute;
    left: 695px;
    top: 1555px;
    width: 202px;
    height: 60px;
    border: 2px solid #d8d8d8;
    border-radius: 10px;
    background: #e9ebea;
    font-family: Inter, "Liberation Sans", sans-serif;
    font-size: 27px;
    line-height: 52px;
    text-align: center;
    color: #222;
    box-shadow: 0 0 6px rgba(0, 0, 0, .2);
}
```
